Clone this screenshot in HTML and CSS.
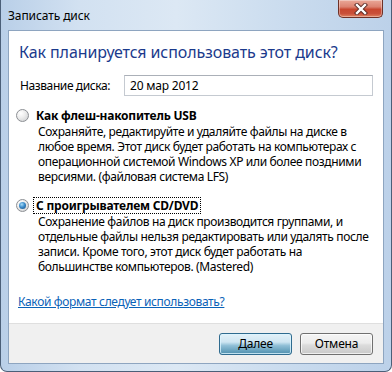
FILE: index.html
```html
<!DOCTYPE html>
<html lang="ru">
<head>
<meta charset="utf-8">
<title>Записать диск</title>
<link rel="stylesheet" href="styles.css">
</head>
<body>
<div class="window">
  <div class="titlebar">
    <span class="title">Записать диск</span>
    <div class="close">
      <svg width="18" height="12" viewBox="0 0 18 12">
        <path d="M5 2 L13 10 M13 2 L5 10" stroke="#5a2a24" stroke-width="4.2" stroke-linecap="square"/>
        <path d="M5 2 L13 10 M13 2 L5 10" stroke="#ffffff" stroke-width="2.4" stroke-linecap="square"/>
      </svg>
    </div>
  </div>
  <div class="client">
    <div class="content">
      <div class="heading">Как планируется использовать этот диск?</div>
      <div class="name-row">
        <span class="name-label">Название диска:</span>
        <div class="input">20 мар 2012</div>
      </div>
      <div class="option">
        <div class="option-row">
          <span class="radio"></span>
          <span class="option-label">Как флеш-накопитель USB</span>
        </div>
        <div class="desc">Сохраняйте, редактируйте и удаляйте файлы на диске в<br>любое время. Этот диск будет работать на компьютерах с<br>операционной системой Windows XP или более поздними<br>версиями. (файловая система LFS)</div>
      </div>
      <div class="option option-second">
        <div class="option-row">
          <span class="radio checked"></span>
          <span class="option-label focused">С проигрывателем CD/DVD</span>
        </div>
        <div class="desc">Сохранение файлов на диск производится группами, и<br>отдельные файлы нельзя редактировать или удалять после<br>записи. Кроме того, этот диск будет работать на<br>большинстве компьютеров. (Mastered)</div>
      </div>
      <a class="link" href="#">Какой формат следует использовать?</a>
    </div>
    <div class="footer">
      <button class="btn btn-default">Далее</button>
      <button class="btn">Отмена</button>
    </div>
  </div>
</div>
</body>
</html>
```
FILE: styles.css
```css
html, body {
  margin: 0;
  padding: 0;
}
body {
  width: 392px;
  height: 372px;
  overflow: hidden;
  font-family: "Noto Sans", "Open Sans", sans-serif;
  font-size: 12px;
  color: #000;
}
.window {
  width: 392px;
  height: 372px;
  box-sizing: border-box;
  display: flex;
  flex-direction: column;
  background: linear-gradient(90deg, #b9cfe8 0%, #d2e1f1 20%, #dce8f4 45%, #c9dbee 75%, #bcd1e9 100%);
  border: 1px solid #4b5f78;
  border-top: none;
  border-radius: 0 0 7px 7px;
}
.titlebar {
  height: 30px;
  flex: none;
  display: flex;
  align-items: flex-start;
  justify-content: space-between;
  padding-left: 7px;
  padding-right: 8px;
}
.title {
  font-size: 12px;
  line-height: 15px;
  margin-top: 8px;
  color: #000;
  letter-spacing: -0.1px;
}
.close {
  width: 45px;
  height: 18px;
  box-sizing: border-box;
  border: 1px solid #6e3127;
  border-top: none;
  border-radius: 0 0 5px 5px;
  background: linear-gradient(180deg, #eaa898 0%, #dc8371 40%, #c8472f 55%, #c9503a 80%, #e08462 100%);
  display: flex;
  align-items: center;
  justify-content: center;
  box-shadow: inset 0 0 0 1px rgba(255,255,255,0.35);
}
.client {
  flex: none;
  height: 334px;
  margin: 0 7px;
  box-sizing: border-box;
  border: 1px solid #8ea5c0;
  display: flex;
  flex-direction: column;
  background: #fff;
}
.content {
  flex: 1;
  padding: 11px 0 0 10px;
  display: flex;
  flex-direction: column;
  align-items: flex-start;
}
.heading {
  font-size: 16px;
  line-height: 20px;
  color: #1b3a8c;
  letter-spacing: -0.1px;
}
.name-row {
  margin-top: 13px;
  display: flex;
  align-items: center;
  width: 100%;
}
.name-label {
  width: 104px;
  padding-left: 1px;
  line-height: 15px;
  letter-spacing: -0.4px;
}
.input {
  box-sizing: border-box;
  width: 249px;
  height: 21px;
  border: 1px solid #c5cad1;
  border-top-color: #abb0b8;
  padding-left: 5px;
  line-height: 19px;
  letter-spacing: -0.2px;
}
.option {
  margin-top: 11px;
  margin-left: -3px;
}
.option-second {
  margin-top: 13px;
}
.option-row {
  display: flex;
  align-items: center;
}
.radio {
  width: 13px;
  height: 13px;
  box-sizing: border-box;
  border-radius: 50%;
  border: 1px solid #8c8f94;
  background: radial-gradient(circle at 35% 30%, #ffffff 0%, #eeeeee 40%, #c9cbcd 100%);
  position: relative;
  flex: none;
}
.radio.checked::after {
  content: "";
  position: absolute;
  left: 2px;
  top: 2px;
  width: 7px;
  height: 7px;
  border-radius: 50%;
  background: radial-gradient(circle at 40% 35%, #a7dcf8 0%, #3c8ccb 45%, #17497c 100%);
}
.option-label {
  font-weight: bold;
  line-height: 15px;
  margin-left: 4px;
  padding: 0 2px 0 2px;
  border: 1px dotted transparent;
  letter-spacing: -0.2px;
}
.option-label.focused {
  border-color: #000;
}
.desc {
  margin-left: 22px;
  line-height: 15px;
  white-space: nowrap;
  letter-spacing: -0.35px;
}
.link {
  margin-top: 20px;
  margin-left: -1px;
  line-height: 15px;
  color: #0a62b8;
  text-decoration: underline;
  letter-spacing: -0.35px;
}
.footer {
  flex: none;
  height: 40px;
  box-sizing: border-box;
  background: #f0f0f0;
  border-top: 1px solid #dfdfdf;
  display: flex;
  justify-content: flex-end;
  align-items: flex-start;
  gap: 8px;
  padding: 9px 10px 0 0;
}
.btn {
  width: 73px;
  height: 22px;
  box-sizing: border-box;
  font-family: "Noto Sans", "Open Sans", sans-serif;
  font-size: 12px;
  color: #000;
  border: 1px solid #707070;
  border-radius: 3px;
  background: linear-gradient(180deg, #f4f4f4 0%, #ececec 45%, #dcdcdc 55%, #c9c9c9 100%);
  box-shadow: inset 0 0 0 1px rgba(255,255,255,0.7);
  padding: 0;
  line-height: 18px;
  letter-spacing: -0.2px;
}
.btn-default {
  border-color: #2f6b8f;
  background: linear-gradient(180deg, #e3f1f8 0%, #cfe6f2 40%, #8fbfd6 58%, #4f8fae 100%);
  box-shadow: inset 0 0 0 1px rgba(220,245,255,0.8);
}
```
